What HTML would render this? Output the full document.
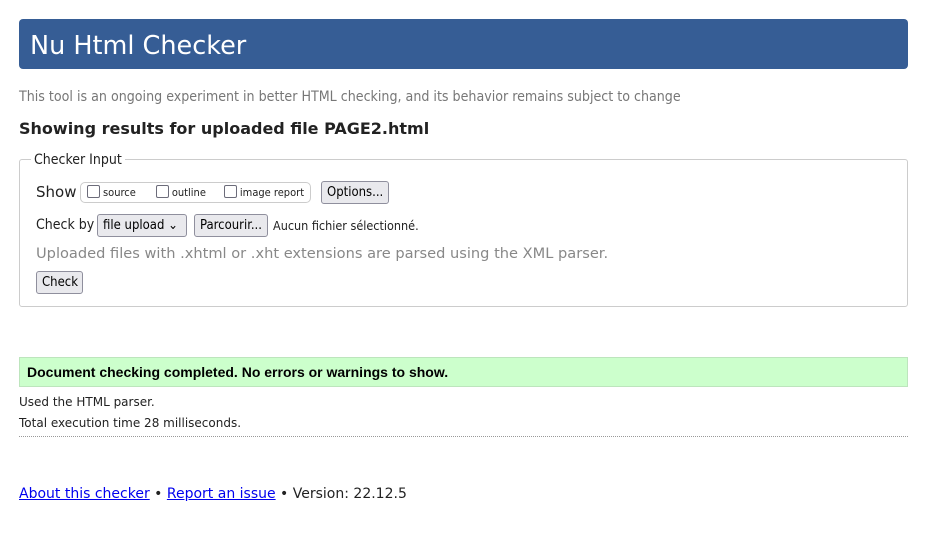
<!DOCTYPE html>
<html><head><style>
*{margin:0;padding:0;box-sizing:border-box}
body{width:929px;height:555px;background:#fff;font-family:"DejaVu Sans",sans-serif;color:#222;position:relative;overflow:hidden}
.a{position:absolute;white-space:nowrap}
.c{font-family:"DejaVu Sans Condensed","DejaVu Sans",sans-serif;font-stretch:condensed}
.btn{position:absolute;background:#e9e9ed;border:1px solid #8f8f9d;border-radius:3px;font-size:13px;line-height:21px;padding:0 5px;color:#000}
.cb{display:inline-block;width:13px;height:13px;border:1.5px solid #6c6c7a;border-radius:2px;vertical-align:-2px;margin-right:3px}
a{color:#0000ee}
</style></head><body>
<div class="a" style="left:19px;top:19px;width:889px;height:50px;background:#365d95;border-radius:4px;color:#fff;font-size:25.5px;line-height:54px;padding-left:11px">Nu Html Checker</div>
<div class="a c" style="left:19px;top:89px;font-size:14.1px;color:#777">This tool is an ongoing experiment in better HTML checking, and its behavior remains subject to change</div>
<div class="a" style="left:19px;top:119px;font-size:16px;font-weight:bold">Showing results for uploaded file PAGE2.html</div>
<div class="a" style="left:19px;top:159px;width:889px;height:148px;border:1px solid #ccc;border-radius:3px"></div>
<div class="a c" style="left:31px;top:152px;background:#fff;padding:0 3px;font-size:14px">Checker Input</div>
<div class="a" style="left:36px;top:183px;font-size:15px">Show</div>
<div class="a c" style="left:80px;top:182px;width:231px;height:21px;border:1px solid #ccc;border-radius:5px;font-size:11px;line-height:19px;padding-left:6px"><span class="cb"></span>source<span style="display:inline-block;width:20px"></span><span class="cb"></span>outline<span style="display:inline-block;width:18px"></span><span class="cb"></span>image report</div>
<div class="btn c" style="left:321px;top:181px;width:68px;height:23px;font-size:13px">Options...</div>
<div class="a c" style="left:36px;top:217px;font-size:14px">Check by</div>
<div class="btn c" style="left:97px;top:214px;width:90px;height:23px;font-size:13px">file upload &#8964;</div>
<div class="btn c" style="left:194px;top:214px;width:74px;height:23px;font-size:13px">Parcourir...</div>
<div class="a c" style="left:273px;top:218px;font-size:12.5px">Aucun fichier sélectionné.</div>
<div class="a" style="left:36px;top:245px;font-size:14.6px;color:#888">Uploaded files with .xhtml or .xht extensions are parsed using the XML parser.</div>
<div class="btn c" style="left:36px;top:271px;width:47px;height:23px;font-size:13px">Check</div>
<div class="a" style="left:19px;top:357px;width:889px;height:30px;background:#ccffcc;border:1px solid #bde5bd;font-family:'Liberation Sans',sans-serif;font-size:14px;font-weight:bold;line-height:28px;padding-left:7px;color:#000">Document checking completed. No errors or warnings to show.</div>
<div class="a" style="left:19px;top:395px;font-size:12px">Used the HTML parser.</div>
<div class="a" style="left:19px;top:416px;font-size:12px">Total execution time 28 milliseconds.</div>
<div class="a" style="left:19px;top:436px;width:889px;border-top:1px dotted #999"></div>
<div class="a" style="left:19px;top:486px;font-size:14px"><a href="#">About this checker</a> • <a href="#">Report an issue</a> • Version: 22.12.5</div>
</body></html>
